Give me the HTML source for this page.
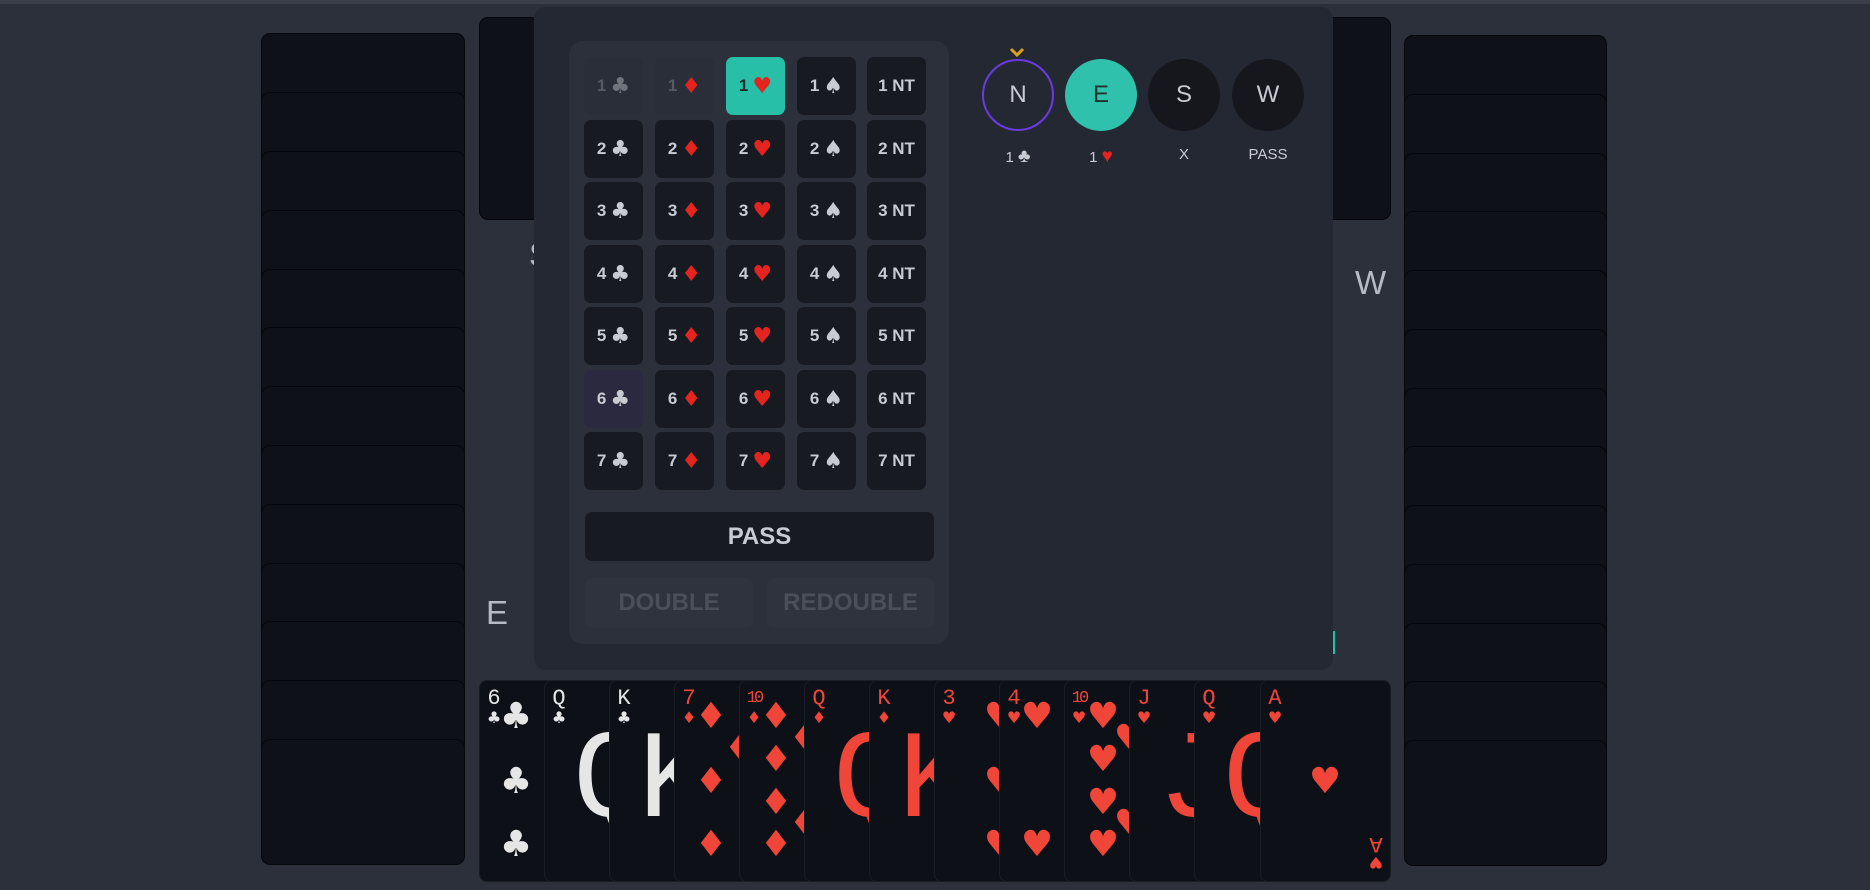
<!DOCTYPE html>
<html><head><meta charset="utf-8"><style>
*{margin:0;padding:0;box-sizing:border-box}
body{width:1870px;height:890px;background:#2b303b;position:relative;overflow:hidden;font-family:"Liberation Sans","DejaVu Sans",sans-serif}
.topline{position:absolute;left:0;top:0;width:1870px;height:4px;background:#3a3f4a}
.bk{position:absolute;background:#0e1117;border:1px solid #05070a;border-radius:9px}
.panel{position:absolute;left:534px;top:7px;width:799px;height:663px;background:#242832;border-radius:12px}
.inner{position:absolute;left:569px;top:41px;width:380px;height:603px;background:#2c303b;border-radius:14px}
.b{position:absolute;width:59px;height:58px;background:#171a21;border-radius:7px;color:#c8cbd2;font-weight:bold;font-size:17px;display:flex;align-items:center;justify-content:center;gap:4px}
.b .s{font-family:"DejaVu Sans",sans-serif;font-size:22px;color:#c8cbd2;font-weight:normal}
.b .r{color:#e5241f}
.dis{background:#2a2e38;color:#555a64}
.dis .s{color:#70747c}
.dis .r{color:#e5241f}
.sel{background:#27bfa8;color:#1c2b2a}
.pur{background:#2b2940}
.big{position:absolute;border-radius:7px;font-weight:bold;font-size:24px;display:flex;align-items:center;justify-content:center}
.seat{position:absolute;width:72px;height:72px;border-radius:50%;display:flex;align-items:center;justify-content:center;font-size:24px;color:#c8cbd2;background:#15171d;top:59px}
.lab{position:absolute;top:146px;width:72px;text-align:center;color:#c8cbd2;font-size:15px}
.lab .r{color:#e5241f}
.lbl{position:absolute;color:#b6bac3;font-size:33px}
.c{position:absolute;top:680px;width:131px;height:202px;background:#0d1117;border:1px solid #1a1d24;border-radius:8px;overflow:hidden;font-family:"Liberation Mono",monospace}
.c .k{position:absolute;left:4px;top:7px;font-size:22px;line-height:22px;width:20px;text-align:center}
.c .ks{position:absolute;left:5px;top:27px;font-size:16px;width:18px;text-align:center;font-family:"DejaVu Sans",sans-serif}
.p{position:absolute;font-family:"DejaVu Sans",sans-serif;font-size:36px;line-height:36px;width:40px;text-align:center;margin-left:-20px;margin-top:-18px}
.w{color:#e6e6e6}.rd{color:#f0463a}
.face{position:absolute;left:0;top:40px;width:131px;text-align:center;font-size:125px;line-height:125px;font-family:"Liberation Mono",monospace}
</style></head><body>
<div class="topline"></div>
<div class="bk" style="left:261px;top:33px;width:204px;height:126px"></div>
<div class="bk" style="left:261px;top:92px;width:204px;height:126px"></div>
<div class="bk" style="left:261px;top:151px;width:204px;height:126px"></div>
<div class="bk" style="left:261px;top:210px;width:204px;height:126px"></div>
<div class="bk" style="left:261px;top:269px;width:204px;height:126px"></div>
<div class="bk" style="left:261px;top:327px;width:204px;height:126px"></div>
<div class="bk" style="left:261px;top:386px;width:204px;height:126px"></div>
<div class="bk" style="left:261px;top:445px;width:204px;height:126px"></div>
<div class="bk" style="left:261px;top:504px;width:204px;height:126px"></div>
<div class="bk" style="left:261px;top:563px;width:204px;height:126px"></div>
<div class="bk" style="left:261px;top:621px;width:204px;height:126px"></div>
<div class="bk" style="left:261px;top:680px;width:204px;height:126px"></div>
<div class="bk" style="left:261px;top:739px;width:204px;height:126px"></div>
<div class="bk" style="left:1404px;top:35px;width:203px;height:126px"></div>
<div class="bk" style="left:1404px;top:94px;width:203px;height:126px"></div>
<div class="bk" style="left:1404px;top:153px;width:203px;height:126px"></div>
<div class="bk" style="left:1404px;top:211px;width:203px;height:126px"></div>
<div class="bk" style="left:1404px;top:270px;width:203px;height:126px"></div>
<div class="bk" style="left:1404px;top:329px;width:203px;height:126px"></div>
<div class="bk" style="left:1404px;top:388px;width:203px;height:126px"></div>
<div class="bk" style="left:1404px;top:446px;width:203px;height:126px"></div>
<div class="bk" style="left:1404px;top:505px;width:203px;height:126px"></div>
<div class="bk" style="left:1404px;top:564px;width:203px;height:126px"></div>
<div class="bk" style="left:1404px;top:623px;width:203px;height:126px"></div>
<div class="bk" style="left:1404px;top:681px;width:203px;height:126px"></div>
<div class="bk" style="left:1404px;top:740px;width:203px;height:126px"></div>
<div class="bk" style="left:479px;top:17px;width:912px;height:203px"></div>

<div class="lbl" style="left:529px;top:236px">S</div>
<div class="lbl" style="left:1355px;top:264px">W</div>
<div class="lbl" style="left:486px;top:594px">E</div>
<div class="lbl" style="left:1314px;top:624px;color:#27bfa8">N</div>

<div class="panel"></div>
<div class="inner"></div>

<div class="b dis" style="left:584px;top:57px">1<span class="s">♣</span></div>
<div class="b dis" style="left:655px;top:57px">1<span class="s r">♦</span></div>
<div class="b sel" style="left:726px;top:57px">1<span class="s r">♥</span></div>
<div class="b" style="left:797px;top:57px">1<span class="s">♠</span></div>
<div class="b" style="left:867px;top:57px">1 NT</div>
<div class="b" style="left:584px;top:120px">2<span class="s">♣</span></div>
<div class="b" style="left:655px;top:120px">2<span class="s r">♦</span></div>
<div class="b" style="left:726px;top:120px">2<span class="s r">♥</span></div>
<div class="b" style="left:797px;top:120px">2<span class="s">♠</span></div>
<div class="b" style="left:867px;top:120px">2 NT</div>
<div class="b" style="left:584px;top:182px">3<span class="s">♣</span></div>
<div class="b" style="left:655px;top:182px">3<span class="s r">♦</span></div>
<div class="b" style="left:726px;top:182px">3<span class="s r">♥</span></div>
<div class="b" style="left:797px;top:182px">3<span class="s">♠</span></div>
<div class="b" style="left:867px;top:182px">3 NT</div>
<div class="b" style="left:584px;top:245px">4<span class="s">♣</span></div>
<div class="b" style="left:655px;top:245px">4<span class="s r">♦</span></div>
<div class="b" style="left:726px;top:245px">4<span class="s r">♥</span></div>
<div class="b" style="left:797px;top:245px">4<span class="s">♠</span></div>
<div class="b" style="left:867px;top:245px">4 NT</div>
<div class="b" style="left:584px;top:307px">5<span class="s">♣</span></div>
<div class="b" style="left:655px;top:307px">5<span class="s r">♦</span></div>
<div class="b" style="left:726px;top:307px">5<span class="s r">♥</span></div>
<div class="b" style="left:797px;top:307px">5<span class="s">♠</span></div>
<div class="b" style="left:867px;top:307px">5 NT</div>
<div class="b pur" style="left:584px;top:370px">6<span class="s">♣</span></div>
<div class="b" style="left:655px;top:370px">6<span class="s r">♦</span></div>
<div class="b" style="left:726px;top:370px">6<span class="s r">♥</span></div>
<div class="b" style="left:797px;top:370px">6<span class="s">♠</span></div>
<div class="b" style="left:867px;top:370px">6 NT</div>
<div class="b" style="left:584px;top:432px">7<span class="s">♣</span></div>
<div class="b" style="left:655px;top:432px">7<span class="s r">♦</span></div>
<div class="b" style="left:726px;top:432px">7<span class="s r">♥</span></div>
<div class="b" style="left:797px;top:432px">7<span class="s">♠</span></div>
<div class="b" style="left:867px;top:432px">7 NT</div>

<div class="big" style="left:585px;top:512px;width:349px;height:49px;background:#171a21;color:#c8cbd2">PASS</div>
<div class="big" style="left:585px;top:578px;width:168px;height:50px;background:#2f333e;color:#4a4f59">DOUBLE</div>
<div class="big" style="left:767px;top:578px;width:167px;height:50px;background:#2f333e;color:#4a4f59">REDOUBLE</div>

<div style="position:absolute;left:1009px;top:44px;width:16px;height:10px">
<svg width="16" height="10"><path d="M2 2 L8 8 L14 2" stroke="#d9a21b" stroke-width="3" fill="none"/></svg></div>
<div class="seat" style="left:982px;background:transparent;border:2px solid #6a3be0">N</div>
<div class="seat" style="left:1065px;background:#2fc1ab;color:#1d3230">E</div>
<div class="seat" style="left:1148px">S</div>
<div class="seat" style="left:1232px">W</div>
<div class="lab" style="left:982px">1 <span style="font-size:19px">♣</span></div>
<div class="lab" style="left:1065px">1 <span class="r" style="font-size:19px">♥</span></div>
<div class="lab" style="left:1148px">X</div>
<div class="lab" style="left:1232px">PASS</div>

<div class="c" style="left:479px"><div class="k w">6</div><div class="ks w">♣</div>
<div class="p w" style="left:36px;top:36px">♣</div><div class="p w" style="left:36px;top:101px">♣</div><div class="p w" style="left:36px;top:164px">♣</div>
<div class="p w" style="left:94px;top:36px">♣</div><div class="p w" style="left:94px;top:101px">♣</div><div class="p w" style="left:94px;top:164px">♣</div></div>
<div class="c" style="left:544px"><div class="k w">Q</div><div class="ks w">♣</div><div class="face w">Q</div></div>
<div class="c" style="left:609px"><div class="k w">K</div><div class="ks w">♣</div><div class="face w">K</div></div>
<div class="c" style="left:674px"><div class="k rd">7</div><div class="ks rd">♦</div>
<div class="p rd" style="left:36px;top:36px">♦</div><div class="p rd" style="left:36px;top:101px">♦</div><div class="p rd" style="left:36px;top:164px">♦</div>
<div class="p rd" style="left:65px;top:68px">♦</div><div class="p rd" style="left:94px;top:36px">♦</div></div>
<div class="c" style="left:739px"><div class="k rd" style="font-size:17px;letter-spacing:-3px">10</div><div class="ks rd">♦</div>
<div class="p rd" style="left:36px;top:36px">♦</div><div class="p rd" style="left:36px;top:79px">♦</div><div class="p rd" style="left:36px;top:122px">♦</div><div class="p rd" style="left:36px;top:164px">♦</div>
<div class="p rd" style="left:65px;top:58px">♦</div><div class="p rd" style="left:65px;top:143px">♦</div></div>
<div class="c" style="left:804px"><div class="k rd">Q</div><div class="ks rd">♦</div><div class="face rd">Q</div></div>
<div class="c" style="left:869px"><div class="k rd">K</div><div class="ks rd">♦</div><div class="face rd">K</div></div>
<div class="c" style="left:934px"><div class="k rd">3</div><div class="ks rd">♥</div>
<div class="p rd" style="left:65px;top:36px">♥</div><div class="p rd" style="left:65px;top:101px">♥</div><div class="p rd" style="left:65px;top:164px">♥</div></div>
<div class="c" style="left:999px"><div class="k rd">4</div><div class="ks rd">♥</div>
<div class="p rd" style="left:37px;top:36px">♥</div><div class="p rd" style="left:37px;top:164px">♥</div><div class="p rd" style="left:94px;top:36px">♥</div><div class="p rd" style="left:94px;top:164px">♥</div></div>
<div class="c" style="left:1064px"><div class="k rd" style="font-size:17px;letter-spacing:-3px">10</div><div class="ks rd">♥</div>
<div class="p rd" style="left:38px;top:36px">♥</div><div class="p rd" style="left:38px;top:79px">♥</div><div class="p rd" style="left:38px;top:122px">♥</div><div class="p rd" style="left:38px;top:164px">♥</div>
<div class="p rd" style="left:65px;top:58px">♥</div><div class="p rd" style="left:65px;top:143px">♥</div></div>
<div class="c" style="left:1129px"><div class="k rd">J</div><div class="ks rd">♥</div><div class="face rd">J</div></div>
<div class="c" style="left:1194px"><div class="k rd">Q</div><div class="ks rd">♥</div><div class="face rd">Q</div></div>
<div class="c" style="left:1260px"><div class="k rd">A</div><div class="ks rd">♥</div>
<div class="p rd" style="left:64px;top:101px">♥</div>
<div style="position:absolute;left:106px;top:152px;width:18px;transform:rotate(180deg);text-align:center;color:#f0463a;font-family:'Liberation Mono',monospace"><div style="font-size:16px;font-family:'DejaVu Sans',sans-serif">♥</div><div style="font-size:22px;line-height:20px">A</div></div>
</div>
</body></html>
